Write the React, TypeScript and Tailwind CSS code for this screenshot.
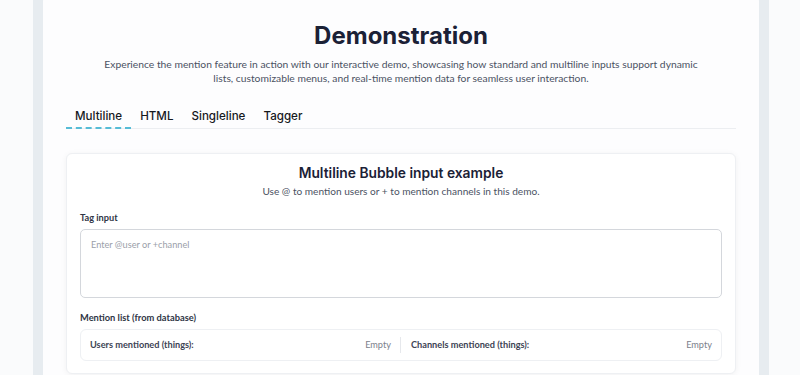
import React from "react";

const lato = { fontFamily: "Lato, 'Open Sans', sans-serif" };

export default function App() {
  const tabs = ["Multiline", "HTML", "Singleline", "Tagger"];
  return (
    <div className="w-[800px] h-[375px] overflow-hidden bg-[#fafbfc]">
      <div className="ml-[33px] w-[736px] h-full bg-[#e7ecf0] pl-[10px] pr-[10px] overflow-hidden">
        <div className="-mt-[12px] h-[400px] rounded-[14px] bg-[#fdfdfe] pt-[32px] px-[23px]">
          <h1 className="text-center text-[24px] font-bold text-[#1b2136] leading-[32px] font-[Inter,sans-serif]">
            Demonstration
          </h1>
          <p
            className="mx-auto mt-[5px] w-[600px] text-center text-[10.3px] leading-[14px] text-[#4b5263]"
            style={lato}
          >
            Experience the mention feature in action with our interactive demo, showcasing how standard and multiline inputs support dynamic lists, customizable menus, and real-time mention data for seamless user interaction.
          </p>
          <div className="mt-[23px] flex border-b border-[#eceef1] font-[Inter,sans-serif]">
            {tabs.map((t, i) => (
              <div
                key={t}
                className={
                  "px-[9px] pb-[3px] text-[11.6px] font-medium leading-[16px] text-[#16181d] " +
                  (i === 0 ? "border-b-2 border-dashed border-[#56bcd6] -mb-px" : "")
                }
              >
                {t}
              </div>
            ))}
          </div>
          <div className="mt-[24px] rounded-[6px] border border-[#eef0f3] bg-white px-[13px] pt-[10px] pb-[12px] shadow-[0_1px_6px_rgba(0,0,0,0.05)]">
            <h2 className="text-center text-[13.8px] font-semibold leading-[18px] text-[#1b2136] font-[Inter,sans-serif]">
              Multiline Bubble input example
            </h2>
            <p className="mt-[2px] text-center text-[10.1px] leading-[14px] text-[#4b5263]" style={lato}>
              Use @ to mention users or + to mention channels in this demo.
            </p>
            <div className="mt-[14px] text-[9.2px] font-bold leading-[12px] text-[#2f3545]" style={lato}>
              Tag input
            </div>
            <div className="mt-[5px] h-[69px] rounded-[5px] border border-[#d4d7dc] bg-white px-[10px] pt-[9px]">
              <div className="text-[9.2px] leading-[12px] text-[#9aa0a9]" style={lato}>
                Enter @user or +channel
              </div>
            </div>
            <div className="mt-[14px] text-[9.3px] font-bold leading-[12px] text-[#2f3545]" style={lato}>
              Mention list (from database)
            </div>
            <div
              className="mt-[5px] flex h-[32px] items-center rounded-[6px] border border-[#eef0f3] bg-white px-[9px] text-[9.2px]"
              style={lato}
            >
              <div className="flex flex-1 items-center justify-between pr-[9px] border-r border-[#e6e8ec] h-[16px]">
                <span className="font-bold text-[#3d4354]">Users mentioned (things):</span>
                <span className="text-[#7c818b]">Empty</span>
              </div>
              <div className="flex flex-1 items-center justify-between pl-[10px]">
                <span className="font-bold text-[#3d4354]">Channels mentioned (things):</span>
                <span className="text-[#7c818b]">Empty</span>
              </div>
            </div>
          </div>
        </div>
      </div>
    </div>
  );
}
